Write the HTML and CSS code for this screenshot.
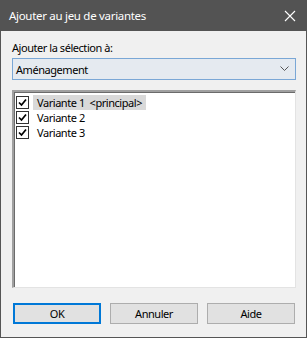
FILE: index.html
```html
<!DOCTYPE html>
<html lang="fr">
<head>
    <meta charset="UTF-8">
    <title>Ajouter au jeu de variantes</title>
    <link rel="stylesheet" href="styles.css">
</head>
<body>
    <div class="window">
        <div class="titlebar">
            <span class="title">Ajouter au jeu de variantes</span>
            <svg class="close" width="12" height="12" viewBox="0 0 12 12">
                <path d="M1 1 L11 11 M11 1 L1 11" stroke="#fff" stroke-width="1.1" fill="none"/>
            </svg>
        </div>

        <div class="content">
            <div class="label">Ajouter la sélection à:</div>
            <div class="combo">
                <span>Aménagement</span>
                <svg width="9" height="6" viewBox="0 0 9 6">
                    <polyline points="0.5,0.5 4.5,4.5 8.5,0.5" stroke="#555" stroke-width="1" fill="none"/>
                </svg>
            </div>

            <div class="listbox">
                <div class="row">
                    <span class="check"><svg width="11" height="11" viewBox="0 0 11 11"><polyline points="2,5.5 4.5,8 9,2.5" stroke="#000" stroke-width="1.7" fill="none"/></svg></span>
                    <span class="item selected">Variante 1&nbsp;&nbsp;&lt;principal&gt;</span>
                </div>
                <div class="row">
                    <span class="check"><svg width="11" height="11" viewBox="0 0 11 11"><polyline points="2,5.5 4.5,8 9,2.5" stroke="#000" stroke-width="1.7" fill="none"/></svg></span>
                    <span class="item">Variante 2</span>
                </div>
                <div class="row">
                    <span class="check"><svg width="11" height="11" viewBox="0 0 11 11"><polyline points="2,5.5 4.5,8 9,2.5" stroke="#000" stroke-width="1.7" fill="none"/></svg></span>
                    <span class="item">Variante 3</span>
                </div>
            </div>

            <div class="buttons">
                <button class="btn default">OK</button>
                <button class="btn">Annuler</button>
                <button class="btn">Aide</button>
            </div>
        </div>
    </div>
</body>
</html>
```

FILE: styles.css
```css
body {
    margin: 0;
    font-family: 'Noto Sans', 'Open Sans', sans-serif;
    font-size: 11px;
    letter-spacing: -0.45px;
    color: #000;
}
.window {
    width: 307px;
    height: 338px;
    box-sizing: border-box;
    border: 1px solid #555;
    border-top: none;
    background-color: #f0f0f0;
    display: flex;
    flex-direction: column;
}
.titlebar {
    height: 31px;
    margin: 0 -1px;
    background-color: #535353;
    color: #fff;
    display: flex;
    align-items: center;
    justify-content: space-between;
    padding: 0 11px 0 9px;
}
.title {
    font-size: 11.5px;
    letter-spacing: -0.3px;
}
.content {
    padding: 9px 10px 0 11px;
}
.label {
    line-height: 15px;
    height: 15px;
    margin-bottom: 3px;
}
.combo {
    height: 22px;
    box-sizing: border-box;
    border: 1px solid #7aa7d6;
    background-color: #e5eaf0;
    display: flex;
    align-items: center;
    justify-content: space-between;
    padding: 0 6px 0 3px;
}
.listbox {
    margin-top: 10px;
    height: 198px;
    box-sizing: border-box;
    background-color: #fff;
    border-style: solid;
    border-width: 2px 1px 1px 2px;
    border-color: #a0a0a0 #e3e3e3 #e3e3e3 #a0a0a0;
    box-shadow: inset 1px 1px 0 #6b6b6b;
    padding: 3px 0 0 2px;
}
.row {
    height: 15px;
    display: flex;
    align-items: center;
}
.check {
    width: 13px;
    height: 13px;
    box-sizing: border-box;
    border: 1px solid #333;
    background-color: #fff;
    display: flex;
    align-items: center;
    justify-content: center;
    margin-right: 4px;
}
.item {
    line-height: 15px;
    padding: 0 4px;
    white-space: nowrap;
}
.item.selected {
    background-color: #d9d9d9;
}
.buttons {
    display: flex;
    gap: 9px;
    padding-left: 1px;
    margin-top: 15px;
}
.btn {
    width: 88px;
    height: 21px;
    box-sizing: border-box;
    border: 1px solid #adadad;
    background-color: #e1e1e1;
    font-family: 'Noto Sans', 'Open Sans', sans-serif;
    font-size: 11px;
    letter-spacing: -0.45px;
    color: #000;
    padding: 0;
}
.btn.default {
    border: 2px solid #0078d7;
}
```
